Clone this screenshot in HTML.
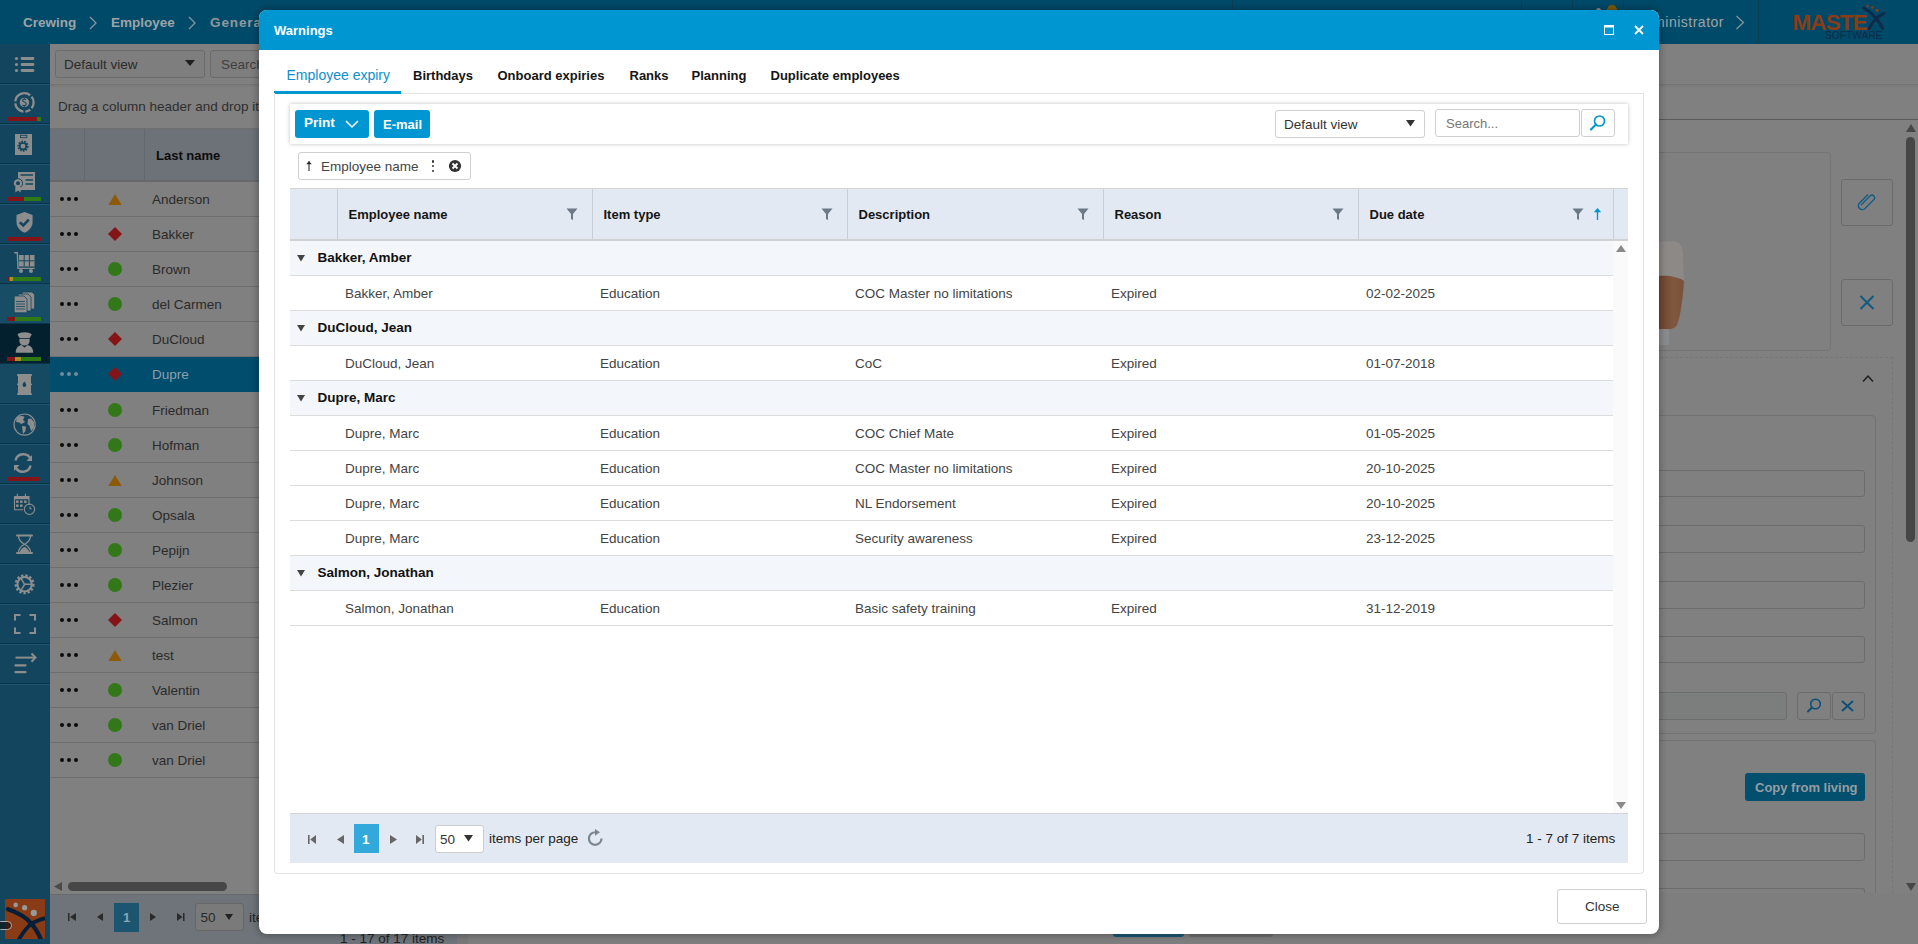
<!DOCTYPE html>
<html><head><meta charset="utf-8"><title>Warnings</title>
<style>
html,body{margin:0;padding:0;}
body{width:1918px;height:944px;position:relative;overflow:hidden;background:#808080;font-family:"Liberation Sans",sans-serif;}
body div{position:absolute;box-sizing:border-box;}
.t{white-space:nowrap;}
</style></head><body>
<div style="left:0px;top:0px;width:1918px;height:44px;background:#004a69"></div><div style="left:1232px;top:0px;width:1px;height:44px;background:#0d3d55"></div><div style="left:1521px;top:0px;width:1px;height:44px;background:#0d3d55"></div><div style="left:1572px;top:0px;width:1px;height:44px;background:#0d3d55"></div><div style="left:1623px;top:0px;width:1px;height:44px;background:#0d3d55"></div><div style="left:1758px;top:0px;width:1px;height:44px;background:#0d3d55"></div><div class="t" style="left:23px;top:15.57px;font-size:13.5px;line-height:13.5px;font-weight:bold;color:#9da3a6;">Crewing</div><svg style="position:absolute;left:88px;top:16px;" width="10" height="14" viewBox="0 0 10 14"><path d="M2 1 L8 7 L2 13" fill="none" stroke="#8a969d" stroke-width="1.3"/></svg><div class="t" style="left:111px;top:15.57px;font-size:13.5px;line-height:13.5px;font-weight:bold;color:#9da3a6;">Employee</div><svg style="position:absolute;left:187px;top:16px;" width="10" height="14" viewBox="0 0 10 14"><path d="M2 1 L8 7 L2 13" fill="none" stroke="#8a969d" stroke-width="1.3"/></svg><div class="t" style="left:210px;top:15.57px;font-size:13.5px;line-height:13.5px;font-weight:bold;color:#8f989c;letter-spacing:0.9px">General</div><div style="left:1607px;top:5px;width:10px;height:10px;background:#7f5a05;border-radius:50%"></div><div style="left:1596px;top:8px;width:5px;height:6px;background:#8f8f8f;border-radius:50% 50% 0 0"></div><div class="t" style="left:1635px;top:15.15px;font-size:14px;line-height:14px;color:#9ea4a7;letter-spacing:0.5px">Administrator</div><svg style="position:absolute;left:1735px;top:14.5px;" width="10" height="16" viewBox="0 0 10 16"><path d="M1.5 1 L8.5 7.5 L1.5 14" fill="none" stroke="#8e9599" stroke-width="1.2"/></svg><div class="t" style="left:1792.5px;top:11.95px;font-size:22.5px;line-height:22.5px;font-weight:bold;color:#8a3c16;letter-spacing:-0.9px;transform:scaleY(0.97)">MASTE</div><svg style="position:absolute;left:1860px;top:3px;" width="26" height="28" viewBox="0 0 26 28"><path d="M3.5 5 C10 8 18 16 22.5 25.5" fill="none" stroke="#0e2a48" stroke-width="3" stroke-linecap="round"/><path d="M24 10.3 C18 13 12 19 9 25.8" fill="none" stroke="#0e2a48" stroke-width="3" stroke-linecap="round"/><circle cx="7.6" cy="3" r="1.2" fill="#8a3c16"/><circle cx="12.3" cy="4.6" r="1.4" fill="#8a3c16"/><circle cx="17" cy="7.3" r="1.6" fill="#8a3c16"/></svg><div class="t" style="left:1825px;top:31.37px;font-size:10.2px;line-height:10.2px;color:#0e2b48;">SOFTWARE</div><div style="left:0px;top:44px;width:50px;height:900px;background:#13465e"></div><div style="left:0px;top:83px;width:50px;height:1px;background:#0c3449"></div><div style="left:0px;top:84px;width:50px;height:1px;background:#1c5670"></div><div style="left:0px;top:123px;width:50px;height:1px;background:#0c3449"></div><div style="left:0px;top:124px;width:50px;height:1px;background:#1c5670"></div><div style="left:0px;top:163px;width:50px;height:1px;background:#0c3449"></div><div style="left:0px;top:164px;width:50px;height:1px;background:#1c5670"></div><div style="left:0px;top:203px;width:50px;height:1px;background:#0c3449"></div><div style="left:0px;top:204px;width:50px;height:1px;background:#1c5670"></div><div style="left:0px;top:243px;width:50px;height:1px;background:#0c3449"></div><div style="left:0px;top:244px;width:50px;height:1px;background:#1c5670"></div><div style="left:0px;top:283px;width:50px;height:1px;background:#0c3449"></div><div style="left:0px;top:284px;width:50px;height:1px;background:#1c5670"></div><div style="left:0px;top:284px;width:50px;height:40px;background:#184d66"></div><div style="left:0px;top:323px;width:50px;height:1px;background:#0c3449"></div><div style="left:0px;top:324px;width:50px;height:1px;background:#1c5670"></div><div style="left:0px;top:324px;width:50px;height:40px;background:#03202f"></div><div style="left:0px;top:363px;width:50px;height:1px;background:#0c3449"></div><div style="left:0px;top:364px;width:50px;height:1px;background:#1c5670"></div><div style="left:0px;top:364px;width:50px;height:40px;background:#164a62"></div><div style="left:0px;top:403px;width:50px;height:1px;background:#0c3449"></div><div style="left:0px;top:404px;width:50px;height:1px;background:#1c5670"></div><div style="left:0px;top:443px;width:50px;height:1px;background:#0c3449"></div><div style="left:0px;top:444px;width:50px;height:1px;background:#1c5670"></div><div style="left:0px;top:483px;width:50px;height:1px;background:#0c3449"></div><div style="left:0px;top:484px;width:50px;height:1px;background:#1c5670"></div><div style="left:0px;top:523px;width:50px;height:1px;background:#0c3449"></div><div style="left:0px;top:524px;width:50px;height:1px;background:#1c5670"></div><div style="left:0px;top:563px;width:50px;height:1px;background:#0c3449"></div><div style="left:0px;top:564px;width:50px;height:1px;background:#1c5670"></div><div style="left:0px;top:603px;width:50px;height:1px;background:#0c3449"></div><div style="left:0px;top:604px;width:50px;height:1px;background:#1c5670"></div><div style="left:0px;top:643px;width:50px;height:1px;background:#0c3449"></div><div style="left:0px;top:644px;width:50px;height:1px;background:#1c5670"></div><div style="left:0px;top:683px;width:50px;height:1px;background:#0c3449"></div><div style="left:0px;top:684px;width:50px;height:1px;background:#1c5670"></div><svg style="position:absolute;left:0px;top:44px;" width="50" height="40" viewBox="0 0 50 40"><circle cx="16.5" cy="14.5" r="1.6" fill="#8d8d8d"/><circle cx="16.5" cy="20.5" r="1.6" fill="#8d8d8d"/><circle cx="16.5" cy="26.5" r="1.6" fill="#8d8d8d"/><path d="M22 14.5H33M22 20.5H33M22 26.5H33" stroke="#8d8d8d" stroke-width="2.8" stroke-linecap="round"/></svg><svg style="position:absolute;left:0px;top:84px;" width="50" height="40" viewBox="0 0 50 40"><path d="M15.25 17.44 A9.2 9.2 0 0 1 30.19 11.25 M31.55 12.61 A9.2 9.2 0 0 1 31.55 24.19 M30.19 25.55 A9.2 9.2 0 0 1 25.36 27.55 M23.44 27.55 A9.2 9.2 0 0 1 15.25 19.36" fill="none" stroke="#8d8d8d" stroke-width="2.3"/><circle cx="24.4" cy="18.4" r="4.7" fill="#8d8d8d"/><path d="M26 15.8 C25.5 15.2 24.9 15 24.3 15 C23.2 15 22.6 15.7 22.6 16.5 C22.6 18.3 26.2 17.6 26.2 19.8 C26.2 20.8 25.4 21.6 24.3 21.6 C23.6 21.6 22.9 21.3 22.5 20.8 M24.4 13.9 V15 M24.4 21.6 V22.8" fill="none" stroke="#13465e" stroke-width="1.1"/></svg><svg style="position:absolute;left:0px;top:124px;" width="50" height="40" viewBox="0 0 50 40"><rect x="15" y="10" width="17" height="21" fill="#8d8d8d"/><rect x="20.5" y="11.3" width="6.3" height="2.4" fill="none" stroke="#13465e" stroke-width="0.9"/><circle cx="23" cy="22.2" r="4.3" fill="none" stroke="#13465e" stroke-width="2.6" stroke-dasharray="1.6 1"/><circle cx="23" cy="22.2" r="3.2" fill="none" stroke="#13465e" stroke-width="1.6"/></svg><svg style="position:absolute;left:0px;top:164px;" width="50" height="40" viewBox="0 0 50 40"><rect x="18" y="8" width="17" height="18" fill="#8d8d8d"/><path d="M20.5 11H33M25.5 16H33M25.5 20H33" stroke="#13465e" stroke-width="1.6"/><circle cx="18" cy="19.3" r="4.6" fill="#8d8d8d" stroke="#13465e" stroke-width="1"/><circle cx="18" cy="19.3" r="2" fill="#13465e"/><path d="M15.3 23 L15.3 28.5 L18 26.5 L20.7 28.5 L20.7 23" fill="#8d8d8d"/></svg><svg style="position:absolute;left:0px;top:204px;" width="50" height="40" viewBox="0 0 50 40"><path d="M24.5 8 L32.6 11 L32.6 18 C32.6 23.5 28.5 27 24.5 28.8 C20.5 27 16.5 23.5 16.5 18 L16.5 11 Z" fill="#8d8d8d"/><path d="M19.8 18.2 L23.3 21.4 L28.8 15.7" fill="none" stroke="#13465e" stroke-width="2.6"/></svg><svg style="position:absolute;left:0px;top:244px;" width="50" height="40" viewBox="0 0 50 40"><path d="M14.2 8.7 H17.3 L18 24.4 H34.7" fill="none" stroke="#8d8d8d" stroke-width="1.4"/><rect x="19" y="11" width="15.5" height="11.5" fill="#8d8d8d"/><path d="M19 16.8H34.5M24.2 11V22.5M29.4 11V22.5" stroke="#13465e" stroke-width="1"/><circle cx="21" cy="27" r="2" fill="#8d8d8d"/><circle cx="31" cy="27" r="2" fill="#8d8d8d"/></svg><svg style="position:absolute;left:0px;top:284px;" width="50" height="40" viewBox="0 0 50 40"><path d="M22.2 8 H32 L34.7 10.7 V25 H22.2 Z" fill="#8d8d8d" stroke="#13465e" stroke-width="0.8"/><path d="M18.2 10 H28 L31 13 V27 H18.2 Z" fill="#8d8d8d" stroke="#13465e" stroke-width="0.8"/><path d="M14.2 12 H24 L27 15 V28.8 H14.2 Z" fill="#8d8d8d" stroke="#13465e" stroke-width="0.8"/><path d="M16 17.5H25M16 20H25M16 22.5H25M16 25H25" stroke="#13465e" stroke-width="0.8"/></svg><svg style="position:absolute;left:0px;top:324px;" width="50" height="40" viewBox="0 0 50 40"><path d="M17.4 10.5 C20 7.5 29 7.5 31.8 10.5 L29.5 14.2 H19.7 Z" fill="#8d8d8d"/><path d="M19.4 15 H29.6 V17 C29.6 20 27 21.5 24.5 21.5 C22 21.5 19.4 20 19.4 17 Z" fill="#8d8d8d"/><path d="M15.7 28.8 C15.7 23.5 19 21.6 21.5 21.1 L24.5 23.5 L27.5 21.1 C30 21.6 33.2 23.5 33.2 28.8 Z" fill="#8d8d8d"/></svg><svg style="position:absolute;left:0px;top:364px;" width="50" height="40" viewBox="0 0 50 40"><rect x="18" y="11" width="13" height="19.5" fill="#8d8d8d"/><rect x="17" y="10" width="15" height="2.2" rx="1" fill="#8d8d8d"/><rect x="17" y="19.6" width="15" height="1.6" rx="0.8" fill="#8d8d8d"/><rect x="17" y="29" width="15" height="2" rx="1" fill="#8d8d8d"/><path d="M24.4 17.6 C25.6 19.2 26.2 20.2 26.2 21.2 A1.8 1.8 0 0 1 22.6 21.2 C22.6 20.2 23.2 19.2 24.4 17.6 Z" fill="#13465e"/></svg><svg style="position:absolute;left:0px;top:404px;" width="50" height="40" viewBox="0 0 50 40"><circle cx="24.6" cy="20.6" r="10.6" fill="none" stroke="#8d8d8d" stroke-width="1.2"/><path d="M17 13 C19.5 11.5 23 11.6 24.5 13 L23 16 L25 18 L21.5 20 L19 18.5 L16 18 Z M22 22 L26 22.5 L25.5 27 L23 30 L22.5 26 Z M28 15 L31 14.5 L34 18 L34 24 L31 27 L29.5 22 L27.5 20 Z" fill="#8d8d8d"/></svg><svg style="position:absolute;left:0px;top:444px;" width="50" height="40" viewBox="0 0 50 40"><path d="M15.5 16.5 A8 8 0 0 1 30.8 15.5" fill="none" stroke="#8d8d8d" stroke-width="2.4"/><path d="M32 11 L32 17 L26.5 17 Z" fill="#8d8d8d"/><path d="M30.6 21.5 A8 8 0 0 1 15.3 22.5" fill="none" stroke="#8d8d8d" stroke-width="2.4"/><path d="M14 27 L14 21 L19.5 21 Z" fill="#8d8d8d"/></svg><svg style="position:absolute;left:0px;top:484px;" width="50" height="40" viewBox="0 0 50 40"><path d="M14.5 12.5 H29 V21 M14.5 12.5 V25.7 H23" fill="none" stroke="#8d8d8d" stroke-width="1.1"/><rect x="14.5" y="12" width="14.5" height="3.2" fill="#8d8d8d"/><path d="M17.3 9.8V13.5M25.4 9.8V13.5" stroke="#8d8d8d" stroke-width="1.1"/><rect x="16" y="16.5" width="2.6" height="2.4" fill="#8d8d8d"/><rect x="20" y="16.5" width="2.6" height="2.4" fill="#8d8d8d"/><rect x="24" y="16.5" width="2.6" height="2.4" fill="#8d8d8d"/><rect x="16" y="20.5" width="2.6" height="2.4" fill="#8d8d8d"/><rect x="20" y="20.5" width="2.6" height="2.4" fill="#8d8d8d"/><circle cx="29.5" cy="25.3" r="5.2" fill="none" stroke="#8d8d8d" stroke-width="1.1"/><path d="M29.5 22 V25.3 L32 25.3 Z" fill="#8d8d8d"/></svg><svg style="position:absolute;left:0px;top:524px;" width="50" height="40" viewBox="0 0 50 40"><path d="M17 11.5 H32 M17 29 H32" stroke="#8d8d8d" stroke-width="2" stroke-linecap="round"/><path d="M18.5 12 C18.5 17 22.5 19 24.5 20.3 C26.5 19 30.5 17 30.5 12 M18.5 28.5 C18.5 23.5 22.5 21.5 24.5 20.3 C26.5 21.5 30.5 23.5 30.5 28.5" fill="none" stroke="#8d8d8d" stroke-width="1.3"/><path d="M19.5 28.5 C20.5 25 23 23.5 24.5 23 C26 23.5 28.5 25 29.5 28.5 Z" fill="#8d8d8d"/></svg><svg style="position:absolute;left:0px;top:564px;" width="50" height="40" viewBox="0 0 50 40"><circle cx="24.6" cy="20.3" r="8.2" fill="none" stroke="#8d8d8d" stroke-width="3.6" stroke-dasharray="2.2 1.7"/><circle cx="24.6" cy="20.3" r="7.2" fill="none" stroke="#8d8d8d" stroke-width="2"/><path d="M24.6 20.3 L31 20.3 M24.6 20.3 L21.3 14.8 M24.6 20.3 L21.3 25.8" stroke="#8d8d8d" stroke-width="1.5"/></svg><svg style="position:absolute;left:0px;top:604px;" width="50" height="40" viewBox="0 0 50 40"><path d="M15 16.5 V11 H20.5 M29.5 11 H35 V16.5 M35 23.5 V29 H29.5 M20.5 29 H15 V23.5" fill="none" stroke="#8d8d8d" stroke-width="2"/></svg><svg style="position:absolute;left:0px;top:644px;" width="50" height="40" viewBox="0 0 50 40"><path d="M15.5 13.6 H34.5" stroke="#8d8d8d" stroke-width="2"/><path d="M31.5 9.5 L35.5 13.6 L31.5 17.8" fill="none" stroke="#8d8d8d" stroke-width="2"/><path d="M15.5 21.4 H25.5 M15.5 28.2 H25.5" stroke="#8d8d8d" stroke-width="2.2" stroke-linecap="round"/></svg><svg style="position:absolute;left:7px;top:117px;" width="34" height="4" viewBox="0 0 34 4"><rect x="0" y="0" width="30" height="4" fill="#851418"/><rect x="30" y="0" width="4" height="4" fill="#2f7a14"/></svg><svg style="position:absolute;left:7px;top:197px;" width="34" height="4" viewBox="0 0 34 4"><rect x="0" y="0" width="17" height="4" fill="#851418"/><rect x="17" y="0" width="17" height="4" fill="#2f7a14"/></svg><svg style="position:absolute;left:7px;top:237px;" width="34" height="4" viewBox="0 0 34 4"><rect x="0" y="0" width="34" height="4" fill="#851418"/></svg><svg style="position:absolute;left:7px;top:277px;" width="34" height="4" viewBox="0 0 34 4"><rect x="0" y="0" width="2.5" height="4" fill="#851418"/><rect x="2.5" y="0" width="3.5" height="4" fill="#a39222"/><rect x="6.0" y="0" width="28" height="4" fill="#2f7a14"/></svg><svg style="position:absolute;left:7px;top:317px;" width="34" height="4" viewBox="0 0 34 4"><rect x="0" y="0" width="8" height="4" fill="#851418"/><rect x="8" y="0" width="26" height="4" fill="#2f7a14"/></svg><svg style="position:absolute;left:7px;top:357px;" width="34" height="4" viewBox="0 0 34 4"><rect x="0" y="0" width="8" height="4" fill="#851418"/><rect x="8" y="0" width="6" height="4" fill="#a39222"/><rect x="14" y="0" width="20" height="4" fill="#2f7a14"/></svg><svg style="position:absolute;left:7px;top:477px;" width="34" height="4" viewBox="0 0 34 4"><rect x="0" y="0" width="32" height="4" fill="#851418"/></svg><svg style="position:absolute;left:5px;top:899px;" width="40" height="40" viewBox="0 0 40 40"><rect width="40" height="40" rx="1" fill="#883b15"/><circle cx="10.7" cy="5.9" r="2.3" fill="#959a9c"/><circle cx="19.6" cy="8.7" r="2.6" fill="#959a9c"/><circle cx="28.8" cy="13.9" r="3.1" fill="#959a9c"/><path d="M3 10.2 Q20 16 27 25.3 T36 41" fill="none" stroke="#051e3a" stroke-width="4.3" stroke-linecap="round"/><path d="M41 19 Q31 21.5 25.9 25.3 T13.5 41" fill="none" stroke="#051e3a" stroke-width="3.8"/></svg><div style="left:-4px;top:921px;width:16px;height:8.5px;background:linear-gradient(90deg,#0c2630 60%,#3a1a10 60%);border:1px solid #b0aaa8;border-radius:5px"></div><div style="left:50px;top:44px;width:1868px;height:900px;background:#808080"></div><div style="left:55px;top:50px;width:150px;height:28px;border:1px solid #6b6b6b;border-radius:3px;background:#7e7e7e"></div><div class="t" style="left:64px;top:57.57px;font-size:13.5px;line-height:13.5px;color:#2b2b2b;">Default view</div><svg style="position:absolute;left:185px;top:60px;" width="10" height="8" viewBox="0 0 10 8"><path d="M0 0 L10 0 L5 6 Z" fill="#1e1e1e"/></svg><div style="left:210px;top:50px;width:120px;height:28px;border:1px solid #6b6b6b;border-radius:3px;background:#7e7e7e"></div><div class="t" style="left:221px;top:57.57px;font-size:13.5px;line-height:13.5px;color:#3e3e3e;">Search...</div><div style="left:50px;top:84px;width:1868px;height:1px;background:#737373"></div><div style="left:50px;top:85px;width:1868px;height:2px;background:#7b7b7b"></div><div class="t" style="left:58px;top:99.57px;font-size:13.5px;line-height:13.5px;color:#2e2e2e;">Drag a column header and drop it here to group by that column</div><div style="left:50px;top:128px;width:418px;height:1px;background:#6f6f6f"></div><div style="left:50px;top:129px;width:418px;height:51px;background:#6c7277"></div><div style="left:84px;top:129px;width:1px;height:52px;background:#62686d"></div><div style="left:144px;top:129px;width:1px;height:52px;background:#62686d"></div><div style="left:50px;top:180px;width:418px;height:2px;background:#686868"></div><div class="t" style="left:156px;top:149.00px;font-size:13px;line-height:13px;font-weight:bold;color:#0c0c0c;">Last name</div><div style="left:50px;top:216px;width:418px;height:1px;background:#6e6e6e"></div><div style="left:59.5px;top:197px;width:4px;height:4px;background:#0a0a0a;border-radius:50%"></div><div style="left:66.5px;top:197px;width:4px;height:4px;background:#0a0a0a;border-radius:50%"></div><div style="left:73.5px;top:197px;width:4px;height:4px;background:#0a0a0a;border-radius:50%"></div><svg style="position:absolute;left:108px;top:193.5px;" width="14" height="11.5" viewBox="0 0 14 11.5"><path d="M7 0 L14 11.5 L0 11.5 Z" fill="#8d5a08"/></svg><div class="t" style="left:152px;top:192.57px;font-size:13.5px;line-height:13.5px;color:#2a2a2a;">Anderson</div><div style="left:50px;top:251px;width:418px;height:1px;background:#6e6e6e"></div><div style="left:59.5px;top:232px;width:4px;height:4px;background:#0a0a0a;border-radius:50%"></div><div style="left:66.5px;top:232px;width:4px;height:4px;background:#0a0a0a;border-radius:50%"></div><div style="left:73.5px;top:232px;width:4px;height:4px;background:#0a0a0a;border-radius:50%"></div><svg style="position:absolute;left:108px;top:227px;" width="14" height="14" viewBox="0 0 14 14"><path d="M7 0 L14 7 L7 14 L0 7 Z" fill="#851418"/></svg><div class="t" style="left:152px;top:227.57px;font-size:13.5px;line-height:13.5px;color:#2a2a2a;">Bakker</div><div style="left:50px;top:286px;width:418px;height:1px;background:#6e6e6e"></div><div style="left:59.5px;top:267px;width:4px;height:4px;background:#0a0a0a;border-radius:50%"></div><div style="left:66.5px;top:267px;width:4px;height:4px;background:#0a0a0a;border-radius:50%"></div><div style="left:73.5px;top:267px;width:4px;height:4px;background:#0a0a0a;border-radius:50%"></div><div style="left:108px;top:262px;width:14px;height:14px;background:#327818;border-radius:50%"></div><div class="t" style="left:152px;top:262.57px;font-size:13.5px;line-height:13.5px;color:#2a2a2a;">Brown</div><div style="left:50px;top:321px;width:418px;height:1px;background:#6e6e6e"></div><div style="left:59.5px;top:302px;width:4px;height:4px;background:#0a0a0a;border-radius:50%"></div><div style="left:66.5px;top:302px;width:4px;height:4px;background:#0a0a0a;border-radius:50%"></div><div style="left:73.5px;top:302px;width:4px;height:4px;background:#0a0a0a;border-radius:50%"></div><div style="left:108px;top:297px;width:14px;height:14px;background:#327818;border-radius:50%"></div><div class="t" style="left:152px;top:297.57px;font-size:13.5px;line-height:13.5px;color:#2a2a2a;">del Carmen</div><div style="left:50px;top:356px;width:418px;height:1px;background:#6e6e6e"></div><div style="left:59.5px;top:337px;width:4px;height:4px;background:#0a0a0a;border-radius:50%"></div><div style="left:66.5px;top:337px;width:4px;height:4px;background:#0a0a0a;border-radius:50%"></div><div style="left:73.5px;top:337px;width:4px;height:4px;background:#0a0a0a;border-radius:50%"></div><svg style="position:absolute;left:108px;top:332px;" width="14" height="14" viewBox="0 0 14 14"><path d="M7 0 L14 7 L7 14 L0 7 Z" fill="#851418"/></svg><div class="t" style="left:152px;top:332.57px;font-size:13.5px;line-height:13.5px;color:#2a2a2a;">DuCloud</div><div style="left:50px;top:357px;width:418px;height:35px;background:#004d6d"></div><div style="left:59.5px;top:372px;width:4px;height:4px;background:#6f8a99;border-radius:50%"></div><div style="left:66.5px;top:372px;width:4px;height:4px;background:#6f8a99;border-radius:50%"></div><div style="left:73.5px;top:372px;width:4px;height:4px;background:#6f8a99;border-radius:50%"></div><svg style="position:absolute;left:108px;top:367px;" width="14" height="14" viewBox="0 0 14 14"><path d="M7 0 L14 7 L7 14 L0 7 Z" fill="#851418"/></svg><div class="t" style="left:152px;top:367.57px;font-size:13.5px;line-height:13.5px;color:#8d9fa8;">Dupre</div><div style="left:50px;top:427px;width:418px;height:1px;background:#6e6e6e"></div><div style="left:59.5px;top:408px;width:4px;height:4px;background:#0a0a0a;border-radius:50%"></div><div style="left:66.5px;top:408px;width:4px;height:4px;background:#0a0a0a;border-radius:50%"></div><div style="left:73.5px;top:408px;width:4px;height:4px;background:#0a0a0a;border-radius:50%"></div><div style="left:108px;top:403px;width:14px;height:14px;background:#327818;border-radius:50%"></div><div class="t" style="left:152px;top:403.57px;font-size:13.5px;line-height:13.5px;color:#2a2a2a;">Friedman</div><div style="left:50px;top:462px;width:418px;height:1px;background:#6e6e6e"></div><div style="left:59.5px;top:443px;width:4px;height:4px;background:#0a0a0a;border-radius:50%"></div><div style="left:66.5px;top:443px;width:4px;height:4px;background:#0a0a0a;border-radius:50%"></div><div style="left:73.5px;top:443px;width:4px;height:4px;background:#0a0a0a;border-radius:50%"></div><div style="left:108px;top:438px;width:14px;height:14px;background:#327818;border-radius:50%"></div><div class="t" style="left:152px;top:438.57px;font-size:13.5px;line-height:13.5px;color:#2a2a2a;">Hofman</div><div style="left:50px;top:497px;width:418px;height:1px;background:#6e6e6e"></div><div style="left:59.5px;top:478px;width:4px;height:4px;background:#0a0a0a;border-radius:50%"></div><div style="left:66.5px;top:478px;width:4px;height:4px;background:#0a0a0a;border-radius:50%"></div><div style="left:73.5px;top:478px;width:4px;height:4px;background:#0a0a0a;border-radius:50%"></div><svg style="position:absolute;left:108px;top:474.5px;" width="14" height="11.5" viewBox="0 0 14 11.5"><path d="M7 0 L14 11.5 L0 11.5 Z" fill="#8d5a08"/></svg><div class="t" style="left:152px;top:473.57px;font-size:13.5px;line-height:13.5px;color:#2a2a2a;">Johnson</div><div style="left:50px;top:532px;width:418px;height:1px;background:#6e6e6e"></div><div style="left:59.5px;top:513px;width:4px;height:4px;background:#0a0a0a;border-radius:50%"></div><div style="left:66.5px;top:513px;width:4px;height:4px;background:#0a0a0a;border-radius:50%"></div><div style="left:73.5px;top:513px;width:4px;height:4px;background:#0a0a0a;border-radius:50%"></div><div style="left:108px;top:508px;width:14px;height:14px;background:#327818;border-radius:50%"></div><div class="t" style="left:152px;top:508.57px;font-size:13.5px;line-height:13.5px;color:#2a2a2a;">Opsala</div><div style="left:50px;top:567px;width:418px;height:1px;background:#6e6e6e"></div><div style="left:59.5px;top:548px;width:4px;height:4px;background:#0a0a0a;border-radius:50%"></div><div style="left:66.5px;top:548px;width:4px;height:4px;background:#0a0a0a;border-radius:50%"></div><div style="left:73.5px;top:548px;width:4px;height:4px;background:#0a0a0a;border-radius:50%"></div><div style="left:108px;top:543px;width:14px;height:14px;background:#327818;border-radius:50%"></div><div class="t" style="left:152px;top:543.57px;font-size:13.5px;line-height:13.5px;color:#2a2a2a;">Pepijn</div><div style="left:50px;top:602px;width:418px;height:1px;background:#6e6e6e"></div><div style="left:59.5px;top:583px;width:4px;height:4px;background:#0a0a0a;border-radius:50%"></div><div style="left:66.5px;top:583px;width:4px;height:4px;background:#0a0a0a;border-radius:50%"></div><div style="left:73.5px;top:583px;width:4px;height:4px;background:#0a0a0a;border-radius:50%"></div><div style="left:108px;top:578px;width:14px;height:14px;background:#327818;border-radius:50%"></div><div class="t" style="left:152px;top:578.57px;font-size:13.5px;line-height:13.5px;color:#2a2a2a;">Plezier</div><div style="left:50px;top:637px;width:418px;height:1px;background:#6e6e6e"></div><div style="left:59.5px;top:618px;width:4px;height:4px;background:#0a0a0a;border-radius:50%"></div><div style="left:66.5px;top:618px;width:4px;height:4px;background:#0a0a0a;border-radius:50%"></div><div style="left:73.5px;top:618px;width:4px;height:4px;background:#0a0a0a;border-radius:50%"></div><svg style="position:absolute;left:108px;top:613px;" width="14" height="14" viewBox="0 0 14 14"><path d="M7 0 L14 7 L7 14 L0 7 Z" fill="#851418"/></svg><div class="t" style="left:152px;top:613.57px;font-size:13.5px;line-height:13.5px;color:#2a2a2a;">Salmon</div><div style="left:50px;top:672px;width:418px;height:1px;background:#6e6e6e"></div><div style="left:59.5px;top:653px;width:4px;height:4px;background:#0a0a0a;border-radius:50%"></div><div style="left:66.5px;top:653px;width:4px;height:4px;background:#0a0a0a;border-radius:50%"></div><div style="left:73.5px;top:653px;width:4px;height:4px;background:#0a0a0a;border-radius:50%"></div><svg style="position:absolute;left:108px;top:649.5px;" width="14" height="11.5" viewBox="0 0 14 11.5"><path d="M7 0 L14 11.5 L0 11.5 Z" fill="#8d5a08"/></svg><div class="t" style="left:152px;top:648.57px;font-size:13.5px;line-height:13.5px;color:#2a2a2a;">test</div><div style="left:50px;top:707px;width:418px;height:1px;background:#6e6e6e"></div><div style="left:59.5px;top:688px;width:4px;height:4px;background:#0a0a0a;border-radius:50%"></div><div style="left:66.5px;top:688px;width:4px;height:4px;background:#0a0a0a;border-radius:50%"></div><div style="left:73.5px;top:688px;width:4px;height:4px;background:#0a0a0a;border-radius:50%"></div><div style="left:108px;top:683px;width:14px;height:14px;background:#327818;border-radius:50%"></div><div class="t" style="left:152px;top:683.57px;font-size:13.5px;line-height:13.5px;color:#2a2a2a;">Valentin</div><div style="left:50px;top:742px;width:418px;height:1px;background:#6e6e6e"></div><div style="left:59.5px;top:723px;width:4px;height:4px;background:#0a0a0a;border-radius:50%"></div><div style="left:66.5px;top:723px;width:4px;height:4px;background:#0a0a0a;border-radius:50%"></div><div style="left:73.5px;top:723px;width:4px;height:4px;background:#0a0a0a;border-radius:50%"></div><div style="left:108px;top:718px;width:14px;height:14px;background:#327818;border-radius:50%"></div><div class="t" style="left:152px;top:718.57px;font-size:13.5px;line-height:13.5px;color:#2a2a2a;">van Driel</div><div style="left:50px;top:777px;width:418px;height:1px;background:#6e6e6e"></div><div style="left:59.5px;top:758px;width:4px;height:4px;background:#0a0a0a;border-radius:50%"></div><div style="left:66.5px;top:758px;width:4px;height:4px;background:#0a0a0a;border-radius:50%"></div><div style="left:73.5px;top:758px;width:4px;height:4px;background:#0a0a0a;border-radius:50%"></div><div style="left:108px;top:753px;width:14px;height:14px;background:#327818;border-radius:50%"></div><div class="t" style="left:152px;top:753.57px;font-size:13.5px;line-height:13.5px;color:#2a2a2a;">van Driel</div><svg style="position:absolute;left:54px;top:882px;" width="8" height="9" viewBox="0 0 8 9"><path d="M8 0 L8 9 L0 4.5 Z" fill="#4a4a4a"/></svg><div style="left:68px;top:882px;width:159px;height:9px;background:#474747;border-radius:5px"></div><div style="left:50px;top:894px;width:418px;height:1px;background:#6a6a6a"></div><div style="left:50px;top:895px;width:418px;height:49px;background:#6e7479"></div><svg style="position:absolute;left:67.5px;top:913px;" width="8" height="8" viewBox="0 0 8 8"><path d="M0 0 H1.5 V8 H0 Z M8 0 V8 L2 4 Z" fill="#2a2a2a"/></svg><svg style="position:absolute;left:97px;top:913px;" width="6" height="8" viewBox="0 0 6 8"><path d="M6 0 V8 L0 4 Z" fill="#2a2a2a"/></svg><div style="left:114px;top:903px;width:25px;height:29px;background:#1b5570"></div><div class="t" style="left:123px;top:911.00px;font-size:13px;line-height:13px;font-weight:bold;color:#8aa6b5;">1</div><svg style="position:absolute;left:150px;top:913px;" width="6" height="8" viewBox="0 0 6 8"><path d="M0 0 V8 L6 4 Z" fill="#2a2a2a"/></svg><svg style="position:absolute;left:177px;top:913px;" width="7.5" height="8" viewBox="0 0 7.5 8"><path d="M6 0 H7.5 V8 H6 Z M0 0 V8 L5.5 4 Z" fill="#2a2a2a"/></svg><div style="left:195px;top:903px;width:49px;height:28px;border:1px solid #666;border-radius:3px;background:#7a7a7a"></div><div class="t" style="left:200.5px;top:910.57px;font-size:13.5px;line-height:13.5px;color:#2a2a2a;">50</div><svg style="position:absolute;left:225px;top:914px;" width="8" height="6" viewBox="0 0 8 6"><path d="M0 0 H8 L4 6 Z" fill="#222"/></svg><div class="t" style="left:249px;top:910.57px;font-size:13.5px;line-height:13.5px;color:#222;">items per page</div><div class="t" style="left:340px;top:931.57px;font-size:13.5px;line-height:13.5px;color:#222;">1 - 17 of 17 items</div><div style="left:457px;top:895px;width:11px;height:49px;background:#787878"></div><div style="left:1659px;top:119px;width:259px;height:1px;background:#5a5a5a"></div><div style="left:1500px;top:152px;width:331px;height:199px;border:1px solid #747474;border-radius:4px"></div><svg style="position:absolute;left:1659px;top:235px;" width="30" height="115" viewBox="0 0 30 115"><path d="M0 7 L14 6 C22 7 24 12 24 20 L25 46 C20 42 8 40 0 41 Z" fill="#8c8987"/><defs><linearGradient id="arm" x1="0" x2="1" y1="0" y2="0"><stop offset="0" stop-color="#6f4530"/><stop offset="0.6" stop-color="#80583f"/><stop offset="1" stop-color="#7a5039"/></linearGradient></defs><path d="M0 41 C8 40 20 42 25 46 C24 60 22 80 18 90 C15 95 8 95 0 94 Z" fill="url(#arm)"/><path d="M0 94 L10 94 L10 110 L0 110 Z" fill="#898b8d"/></svg><div style="left:1841px;top:179px;width:52px;height:47px;border:1px solid #6a6a6a;border-radius:3px"></div><svg style="position:absolute;left:1856px;top:192px;" width="22" height="20" viewBox="0 0 22 20"><path d="M4 14 L13 5 A2.6 2.6 0 0 1 16.8 8.8 L7.5 18 A4 4 0 0 1 2 12.5 L11 3.5" fill="none" stroke="#0d5d86" stroke-width="1.3" transform="translate(1,-1)"/></svg><div style="left:1841px;top:279px;width:52px;height:47px;border:1px solid #6a6a6a;border-radius:3px"></div><svg style="position:absolute;left:1859px;top:295px;" width="16" height="15" viewBox="0 0 16 15"><path d="M1.5 1 L14.5 14 M14.5 1 L1.5 14" stroke="#0f5a80" stroke-width="2"/></svg><div style="left:1600px;top:357px;width:293px;height:536px;border:1px dashed #767676;border-bottom:none"></div><svg style="position:absolute;left:1862px;top:374px;" width="12" height="9" viewBox="0 0 12 9"><path d="M1 7.5 L6 2 L11 7.5" fill="none" stroke="#1e1e1e" stroke-width="1.5"/></svg><div style="left:1500px;top:415px;width:376px;height:319px;border:1px solid #727272;border-radius:4px"></div><div style="left:1500px;top:470px;width:365px;height:27px;border:1px solid #6c6c6c;border-radius:3px"></div><div style="left:1500px;top:525px;width:365px;height:28px;border:1px solid #6c6c6c;border-radius:3px"></div><div style="left:1500px;top:581px;width:365px;height:28px;border:1px solid #6c6c6c;border-radius:3px"></div><div style="left:1500px;top:636px;width:365px;height:27px;border:1px solid #6c6c6c;border-radius:3px"></div><div style="left:1500px;top:692px;width:287px;height:28px;border:1px solid #6c6c6c;border-radius:3px;background:#7c7d7d"></div><div style="left:1797px;top:692px;width:34px;height:28px;border:1px solid #6c6c6c;border-radius:3px"></div><svg style="position:absolute;left:1805px;top:697px;" width="18" height="18" viewBox="0 0 18 18"><circle cx="10.5" cy="7" r="4.8" fill="none" stroke="#0a5075" stroke-width="1.6"/><path d="M7 10.5 L3 14.5" stroke="#0a5075" stroke-width="2" stroke-linecap="round"/></svg><div style="left:1832px;top:692px;width:33px;height:28px;border:1px solid #6c6c6c;border-radius:3px"></div><svg style="position:absolute;left:1841px;top:700px;" width="13" height="12" viewBox="0 0 13 12"><path d="M1 1 L12 11 M12 1 L1 11" stroke="#0a5075" stroke-width="1.8"/></svg><div style="left:1600px;top:740px;width:276px;height:153px;border:1px solid #727272;border-bottom:none;border-radius:4px 4px 0 0"></div><div style="left:1745px;top:773px;width:120px;height:28px;background:#034f6e;border-radius:3px"></div><div class="t" style="left:1755px;top:781.00px;font-size:13px;line-height:13px;font-weight:bold;color:#959ea2;">Copy from living</div><div style="left:1500px;top:833px;width:365px;height:28px;border:1px solid #6c6c6c;border-radius:3px"></div><div style="left:1600px;top:888px;width:265px;height:5px;border:1px solid #6c6c6c;border-bottom:none;border-radius:3px 3px 0 0"></div><div style="left:468px;top:893px;width:1450px;height:51px;background:#7e7e7e"></div><div style="left:1113px;top:905px;width:71px;height:32px;background:#1c5774;border-radius:3px"></div><div style="left:1189px;top:905px;width:84px;height:32px;background:#6c6c6c;border-radius:3px"></div><svg style="position:absolute;left:1906px;top:124px;" width="10" height="8" viewBox="0 0 10 8"><path d="M0 8 L5 0 L10 8 Z" fill="#474747"/></svg><div style="left:1906px;top:137px;width:9px;height:405px;background:#464646;border-radius:5px"></div><svg style="position:absolute;left:1906px;top:883px;" width="10" height="8" viewBox="0 0 10 8"><path d="M0 0 L10 0 L5 8 Z" fill="#474747"/></svg><div style="left:259px;top:10px;width:1400px;height:924px;background:#fff;border-radius:8px;box-shadow:0 0 6px 2px rgba(0,0,0,0.25)"></div><div style="left:259px;top:10px;width:1400px;height:40px;background:#0096d1;border-radius:8px 8px 0 0"></div><div class="t" style="left:274px;top:24.00px;font-size:13px;line-height:13px;font-weight:bold;color:#fff;">Warnings</div><svg style="position:absolute;left:1604px;top:25px;" width="10" height="10" viewBox="0 0 10 10"><rect x="0.5" y="0.5" width="9" height="9" fill="none" stroke="#fff" stroke-width="1"/><rect x="0" y="0" width="10" height="2.5" fill="#fff"/></svg><svg style="position:absolute;left:1634px;top:25px;" width="10" height="10" viewBox="0 0 10 10"><path d="M1 1 L9 9 M9 1 L1 9" stroke="#fff" stroke-width="1.8"/></svg><div class="t" style="left:286.5px;top:67.95px;font-size:14px;line-height:14px;color:#0a8fcc;">Employee expiry</div><div class="t" style="left:413px;top:68.80px;font-size:13px;line-height:13px;font-weight:bold;color:#151515;">Birthdays</div><div class="t" style="left:497.5px;top:68.80px;font-size:13px;line-height:13px;font-weight:bold;color:#151515;">Onboard expiries</div><div class="t" style="left:629.5px;top:68.80px;font-size:13px;line-height:13px;font-weight:bold;color:#151515;">Ranks</div><div class="t" style="left:691.5px;top:68.80px;font-size:13px;line-height:13px;font-weight:bold;color:#151515;">Planning</div><div class="t" style="left:770.5px;top:68.80px;font-size:13px;line-height:13px;font-weight:bold;color:#151515;">Duplicate employees</div><div style="left:274px;top:93px;width:1370px;height:1px;background:#e2e2e2"></div><div style="left:274px;top:91px;width:127px;height:3px;background:#0096d1"></div><div style="left:274px;top:93px;width:1370px;height:781px;border:1px solid #e4e4e4;border-top:none;border-radius:0 0 4px 4px"></div><div style="left:290px;top:104px;width:1338px;height:40px;background:#fff;box-shadow:0 0 4px rgba(0,0,0,0.25)"></div><div style="left:295px;top:110px;width:74px;height:28px;background:#0096d1;border-radius:3px"></div><div class="t" style="left:304px;top:116.17px;font-size:13.5px;line-height:13.5px;font-weight:bold;color:#fff;">Print</div><svg style="position:absolute;left:345px;top:119.5px;" width="14" height="9" viewBox="0 0 14 9"><path d="M1 1 L7 7 L13 1" fill="none" stroke="#fff" stroke-width="1.5"/></svg><div style="left:374px;top:110px;width:56px;height:28px;background:#0096d1;border-radius:3px"></div><div class="t" style="left:383px;top:117.80px;font-size:13px;line-height:13px;font-weight:bold;color:#fff;">E-mail</div><div style="left:1275px;top:110px;width:150px;height:28px;border:1px solid #cfcfcf;border-radius:3px;background:#fff"></div><div class="t" style="left:1284px;top:117.57px;font-size:13.5px;line-height:13.5px;color:#333;">Default view</div><svg style="position:absolute;left:1406px;top:120px;" width="9" height="7" viewBox="0 0 9 7"><path d="M0 0 H9 L4.5 6.5 Z" fill="#333"/></svg><div style="left:1435px;top:109px;width:145px;height:28px;border:1px solid #cfcfcf;border-radius:3px;background:#fff"></div><div class="t" style="left:1446px;top:117.20px;font-size:13px;line-height:13px;color:#767676;">Search...</div><div style="left:1581px;top:109px;width:34px;height:28px;border:1px solid #cfcfcf;border-radius:3px;background:#fff"></div><svg style="position:absolute;left:1589px;top:114px;" width="18" height="18" viewBox="0 0 18 18"><circle cx="10.5" cy="7" r="5" fill="none" stroke="#0096d1" stroke-width="1.7"/><path d="M7 10.5 L2 15.5" stroke="#0096d1" stroke-width="2.2" stroke-linecap="round"/></svg><div style="left:298px;top:152px;width:173px;height:28px;border:1px solid #d0d0d0;border-radius:3px;background:#fff"></div><svg style="position:absolute;left:305px;top:160px;" width="8" height="12" viewBox="0 0 8 12"><path d="M4 1.5 V11" stroke="#2a2a2a" stroke-width="1.1"/><path d="M1.3 4.3 L4 1 L6.7 4.3 Z" fill="#2a2a2a"/></svg><div class="t" style="left:321px;top:159.57px;font-size:13.5px;line-height:13.5px;color:#444;">Employee name</div><div style="left:431.5px;top:160.0px;width:2.6px;height:2.6px;background:#333;border-radius:50%"></div><div style="left:431.5px;top:164.8px;width:2.6px;height:2.6px;background:#333;border-radius:50%"></div><div style="left:431.5px;top:169.6px;width:2.6px;height:2.6px;background:#333;border-radius:50%"></div><svg style="position:absolute;left:448px;top:159px;" width="14" height="14" viewBox="0 0 14 14"><circle cx="7" cy="7" r="6.1" fill="#333"/><path d="M4.5 4.5 L9.5 9.5 M9.5 4.5 L4.5 9.5" stroke="#fff" stroke-width="1.9"/></svg><div style="left:290px;top:188px;width:1338px;height:1px;background:#d4d4d4"></div><div style="left:290px;top:189px;width:1338px;height:50px;background:#e2e9f3"></div><div style="left:290px;top:239px;width:1338px;height:2px;background:#cfd1d4"></div><div style="left:337px;top:189px;width:1px;height:50px;background:#c9ced4"></div><div style="left:592px;top:189px;width:1px;height:50px;background:#c9ced4"></div><div style="left:847px;top:189px;width:1px;height:50px;background:#c9ced4"></div><div style="left:1103px;top:189px;width:1px;height:50px;background:#c9ced4"></div><div style="left:1358px;top:189px;width:1px;height:50px;background:#c9ced4"></div><div style="left:1613px;top:189px;width:1px;height:50px;background:#c9ced4"></div><div class="t" style="left:348.5px;top:208.00px;font-size:13px;line-height:13px;font-weight:bold;color:#151515;">Employee name</div><svg style="position:absolute;left:566px;top:208px;" width="12" height="12" viewBox="0 0 12 12"><path d="M0.5 0.5 H11.5 L7 6 V12 L5 11 V6 Z" fill="#6c7986"/></svg><div class="t" style="left:603.5px;top:208.00px;font-size:13px;line-height:13px;font-weight:bold;color:#151515;">Item type</div><svg style="position:absolute;left:821px;top:208px;" width="12" height="12" viewBox="0 0 12 12"><path d="M0.5 0.5 H11.5 L7 6 V12 L5 11 V6 Z" fill="#6c7986"/></svg><div class="t" style="left:858.5px;top:208.00px;font-size:13px;line-height:13px;font-weight:bold;color:#151515;">Description</div><svg style="position:absolute;left:1077px;top:208px;" width="12" height="12" viewBox="0 0 12 12"><path d="M0.5 0.5 H11.5 L7 6 V12 L5 11 V6 Z" fill="#6c7986"/></svg><div class="t" style="left:1114.5px;top:208.00px;font-size:13px;line-height:13px;font-weight:bold;color:#151515;">Reason</div><svg style="position:absolute;left:1332px;top:208px;" width="12" height="12" viewBox="0 0 12 12"><path d="M0.5 0.5 H11.5 L7 6 V12 L5 11 V6 Z" fill="#6c7986"/></svg><div class="t" style="left:1369.5px;top:208.00px;font-size:13px;line-height:13px;font-weight:bold;color:#151515;">Due date</div><svg style="position:absolute;left:1572px;top:208px;" width="12" height="12" viewBox="0 0 12 12"><path d="M0.5 0.5 H11.5 L7 6 V12 L5 11 V6 Z" fill="#6c7986"/></svg><svg style="position:absolute;left:1593px;top:207px;" width="9" height="13" viewBox="0 0 9 13"><path d="M4.5 2 V13" stroke="#0096d1" stroke-width="1.4"/><path d="M0.8 5.2 L4.5 1 L8.2 5.2 Z" fill="#0096d1"/></svg><div style="left:1613px;top:241px;width:15px;height:572px;background:#fafafa"></div><svg style="position:absolute;left:1616px;top:245px;" width="10" height="7" viewBox="0 0 10 7"><path d="M0 7 L5 0 L10 7 Z" fill="#8a8a8a"/></svg><svg style="position:absolute;left:1616px;top:802px;" width="10" height="7" viewBox="0 0 10 7"><path d="M0 0 L10 0 L5 7 Z" fill="#8a8a8a"/></svg><div style="left:290px;top:241px;width:1323px;height:34px;background:#f3f6fa"></div><svg style="position:absolute;left:297px;top:255px;" width="8" height="7" viewBox="0 0 8 7"><path d="M0 0 H8 L4 6.5 Z" fill="#444"/></svg><div class="t" style="left:317.5px;top:251.07px;font-size:13.5px;line-height:13.5px;font-weight:bold;color:#111;">Bakker, Amber</div><div style="left:290px;top:275px;width:1323px;height:1px;background:#dcdcdc"></div><div class="t" style="left:345px;top:287.07px;font-size:13.5px;line-height:13.5px;color:#444;">Bakker, Amber</div><div class="t" style="left:600px;top:287.07px;font-size:13.5px;line-height:13.5px;color:#444;">Education</div><div class="t" style="left:855px;top:287.07px;font-size:13.5px;line-height:13.5px;color:#444;">COC Master no limitations</div><div class="t" style="left:1111px;top:287.07px;font-size:13.5px;line-height:13.5px;color:#444;">Expired</div><div class="t" style="left:1366px;top:287.07px;font-size:13.5px;line-height:13.5px;color:#444;">02-02-2025</div><div style="left:290px;top:310px;width:1323px;height:1px;background:#dcdcdc"></div><div style="left:290px;top:311px;width:1323px;height:34px;background:#f3f6fa"></div><svg style="position:absolute;left:297px;top:325px;" width="8" height="7" viewBox="0 0 8 7"><path d="M0 0 H8 L4 6.5 Z" fill="#444"/></svg><div class="t" style="left:317.5px;top:321.07px;font-size:13.5px;line-height:13.5px;font-weight:bold;color:#111;">DuCloud, Jean</div><div style="left:290px;top:345px;width:1323px;height:1px;background:#dcdcdc"></div><div class="t" style="left:345px;top:357.07px;font-size:13.5px;line-height:13.5px;color:#444;">DuCloud, Jean</div><div class="t" style="left:600px;top:357.07px;font-size:13.5px;line-height:13.5px;color:#444;">Education</div><div class="t" style="left:855px;top:357.07px;font-size:13.5px;line-height:13.5px;color:#444;">CoC</div><div class="t" style="left:1111px;top:357.07px;font-size:13.5px;line-height:13.5px;color:#444;">Expired</div><div class="t" style="left:1366px;top:357.07px;font-size:13.5px;line-height:13.5px;color:#444;">01-07-2018</div><div style="left:290px;top:380px;width:1323px;height:1px;background:#dcdcdc"></div><div style="left:290px;top:381px;width:1323px;height:34px;background:#f3f6fa"></div><svg style="position:absolute;left:297px;top:395px;" width="8" height="7" viewBox="0 0 8 7"><path d="M0 0 H8 L4 6.5 Z" fill="#444"/></svg><div class="t" style="left:317.5px;top:391.07px;font-size:13.5px;line-height:13.5px;font-weight:bold;color:#111;">Dupre, Marc</div><div style="left:290px;top:415px;width:1323px;height:1px;background:#dcdcdc"></div><div class="t" style="left:345px;top:427.07px;font-size:13.5px;line-height:13.5px;color:#444;">Dupre, Marc</div><div class="t" style="left:600px;top:427.07px;font-size:13.5px;line-height:13.5px;color:#444;">Education</div><div class="t" style="left:855px;top:427.07px;font-size:13.5px;line-height:13.5px;color:#444;">COC Chief Mate</div><div class="t" style="left:1111px;top:427.07px;font-size:13.5px;line-height:13.5px;color:#444;">Expired</div><div class="t" style="left:1366px;top:427.07px;font-size:13.5px;line-height:13.5px;color:#444;">01-05-2025</div><div style="left:290px;top:450px;width:1323px;height:1px;background:#dcdcdc"></div><div class="t" style="left:345px;top:462.07px;font-size:13.5px;line-height:13.5px;color:#444;">Dupre, Marc</div><div class="t" style="left:600px;top:462.07px;font-size:13.5px;line-height:13.5px;color:#444;">Education</div><div class="t" style="left:855px;top:462.07px;font-size:13.5px;line-height:13.5px;color:#444;">COC Master no limitations</div><div class="t" style="left:1111px;top:462.07px;font-size:13.5px;line-height:13.5px;color:#444;">Expired</div><div class="t" style="left:1366px;top:462.07px;font-size:13.5px;line-height:13.5px;color:#444;">20-10-2025</div><div style="left:290px;top:485px;width:1323px;height:1px;background:#dcdcdc"></div><div class="t" style="left:345px;top:497.07px;font-size:13.5px;line-height:13.5px;color:#444;">Dupre, Marc</div><div class="t" style="left:600px;top:497.07px;font-size:13.5px;line-height:13.5px;color:#444;">Education</div><div class="t" style="left:855px;top:497.07px;font-size:13.5px;line-height:13.5px;color:#444;">NL Endorsement</div><div class="t" style="left:1111px;top:497.07px;font-size:13.5px;line-height:13.5px;color:#444;">Expired</div><div class="t" style="left:1366px;top:497.07px;font-size:13.5px;line-height:13.5px;color:#444;">20-10-2025</div><div style="left:290px;top:520px;width:1323px;height:1px;background:#dcdcdc"></div><div class="t" style="left:345px;top:532.07px;font-size:13.5px;line-height:13.5px;color:#444;">Dupre, Marc</div><div class="t" style="left:600px;top:532.07px;font-size:13.5px;line-height:13.5px;color:#444;">Education</div><div class="t" style="left:855px;top:532.07px;font-size:13.5px;line-height:13.5px;color:#444;">Security awareness</div><div class="t" style="left:1111px;top:532.07px;font-size:13.5px;line-height:13.5px;color:#444;">Expired</div><div class="t" style="left:1366px;top:532.07px;font-size:13.5px;line-height:13.5px;color:#444;">23-12-2025</div><div style="left:290px;top:555px;width:1323px;height:1px;background:#dcdcdc"></div><div style="left:290px;top:556px;width:1323px;height:34px;background:#f3f6fa"></div><svg style="position:absolute;left:297px;top:570px;" width="8" height="7" viewBox="0 0 8 7"><path d="M0 0 H8 L4 6.5 Z" fill="#444"/></svg><div class="t" style="left:317.5px;top:566.07px;font-size:13.5px;line-height:13.5px;font-weight:bold;color:#111;">Salmon, Jonathan</div><div style="left:290px;top:590px;width:1323px;height:1px;background:#dcdcdc"></div><div class="t" style="left:345px;top:602.07px;font-size:13.5px;line-height:13.5px;color:#444;">Salmon, Jonathan</div><div class="t" style="left:600px;top:602.07px;font-size:13.5px;line-height:13.5px;color:#444;">Education</div><div class="t" style="left:855px;top:602.07px;font-size:13.5px;line-height:13.5px;color:#444;">Basic safety training</div><div class="t" style="left:1111px;top:602.07px;font-size:13.5px;line-height:13.5px;color:#444;">Expired</div><div class="t" style="left:1366px;top:602.07px;font-size:13.5px;line-height:13.5px;color:#444;">31-12-2019</div><div style="left:290px;top:625px;width:1323px;height:1px;background:#dcdcdc"></div><div style="left:290px;top:813px;width:1338px;height:1px;background:#d3d3d3"></div><div style="left:290px;top:814px;width:1338px;height:49px;background:#e2e9f3"></div><svg style="position:absolute;left:308px;top:835px;" width="8" height="9" viewBox="0 0 8 9"><path d="M0 0 H1.6 V9 H0 Z M8 0 V9 L2.2 4.5 Z" fill="#666"/></svg><svg style="position:absolute;left:337px;top:835px;" width="7" height="9" viewBox="0 0 7 9"><path d="M7 0 V9 L0 4.5 Z" fill="#666"/></svg><div style="left:354px;top:824px;width:25px;height:29px;background:#33a9db"></div><div class="t" style="left:362px;top:832.57px;font-size:13.5px;line-height:13.5px;font-weight:bold;color:#fff;">1</div><svg style="position:absolute;left:390px;top:835px;" width="7" height="9" viewBox="0 0 7 9"><path d="M0 0 V9 L7 4.5 Z" fill="#666"/></svg><svg style="position:absolute;left:416px;top:835px;" width="8" height="9" viewBox="0 0 8 9"><path d="M6.4 0 H8 V9 H6.4 Z M0 0 V9 L5.8 4.5 Z" fill="#666"/></svg><div style="left:435px;top:825px;width:49px;height:28px;border:1px solid #cdcdcd;border-radius:3px;background:#fff"></div><div class="t" style="left:440px;top:832.57px;font-size:13.5px;line-height:13.5px;color:#333;">50</div><svg style="position:absolute;left:464px;top:835px;" width="9" height="7" viewBox="0 0 9 7"><path d="M0 0 H9 L4.5 6.5 Z" fill="#333"/></svg><div class="t" style="left:489px;top:831.57px;font-size:13.5px;line-height:13.5px;color:#222;">items per page</div><svg style="position:absolute;left:587px;top:829px;" width="18" height="19" viewBox="0 0 18 19"><path d="M14.5 9.5 A6.3 6.3 0 1 1 9 3.3" fill="none" stroke="#7a8791" stroke-width="2.2"/><path d="M8 0 L13 3.3 L8 6.8 Z" fill="#7a8791"/></svg><div class="t" style="left:1526px;top:831.57px;font-size:13.5px;line-height:13.5px;color:#222;">1 - 7 of 7 items</div><div style="left:1557px;top:889px;width:90px;height:35px;border:1px solid #d0d0d0;border-radius:3px;background:#fff"></div><div class="t" style="left:1585px;top:899.57px;font-size:13.5px;line-height:13.5px;color:#333;">Close</div>
</body></html>
